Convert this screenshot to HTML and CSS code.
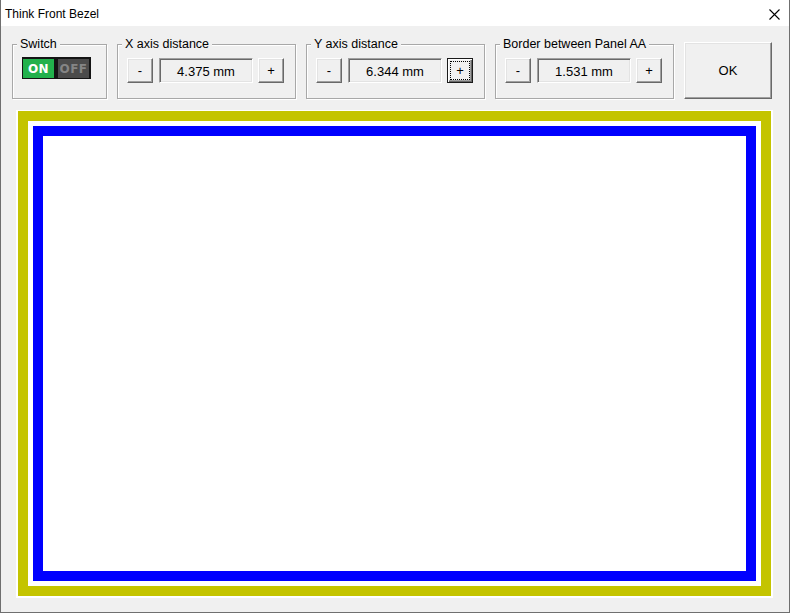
FILE: index.html
```html
<!DOCTYPE html>
<html>
<head>
<meta charset="utf-8">
<link rel="stylesheet" href="styles.css">
</head>
<body>
<div class="window">
  <div class="titlebar">
    <span class="title">Think Front Bezel</span>
    <svg class="close" width="11" height="11" viewBox="0 0 11 11"><path d="M0.5 0.5 L10.5 10.5 M10.5 0.5 L0.5 10.5" stroke="#000" stroke-width="1.1" fill="none"/></svg>
  </div>
  <div class="content">
    <div class="toolbar">
      <div class="group group-switch">
        <span class="legend">Switch</span>
        <div class="switch"><span class="sw sw-on">ON</span><span class="sw sw-off">OFF</span></div>
      </div>
      <div class="group">
        <span class="legend">X axis distance</span>
        <div class="stepper">
          <button class="btn">-</button>
          <div class="value">4.375 mm</div>
          <button class="btn">+</button>
        </div>
      </div>
      <div class="group">
        <span class="legend">Y axis distance</span>
        <div class="stepper">
          <button class="btn">-</button>
          <div class="value">6.344 mm</div>
          <button class="btn btn-focus">+</button>
        </div>
      </div>
      <div class="group">
        <span class="legend">Border between Panel AA</span>
        <div class="stepper">
          <button class="btn">-</button>
          <div class="value">1.531 mm</div>
          <button class="btn">+</button>
        </div>
      </div>
      <button class="btn ok">OK</button>
    </div>
    <div class="picture">
      <div class="frame-yellow">
        <div class="frame-blue"></div>
      </div>
    </div>
  </div>
</div>
</body>
</html>
```
FILE: styles.css
```css
* { box-sizing: border-box; }
html, body { margin: 0; padding: 0; background: #f0f0f0; }
body {
  font-family: "Liberation Sans", Arial, sans-serif;
  font-size: 12px;
  color: #000;
}
.window {
  width: 790px;
  height: 613px;
  background: #f0f0f0;
  border: 1px solid #6f6f6f;
  border-top: none;
  display: flex;
  flex-direction: column;
}
.titlebar {
  height: 26px;
  flex: none;
  background: #fff;
  display: flex;
  align-items: center;
  justify-content: space-between;
  padding: 0 9px 0 4px;
}
.title {
  font-size: 12px;
  line-height: 14px;
  padding-top: 1px;
}
.close { display: block; margin-top: 2px; }
.content {
  padding: 16px 0 0 11px;
}
.toolbar {
  display: flex;
  align-items: flex-start;
  gap: 10px;
}
.group {
  position: relative;
  margin-top: 2px;
  width: 179px;
  height: 55px;
  border: 1px solid #a8a8a8;
  box-shadow: 1px 1px 0 #fff, inset 1px 1px 0 #fff;
  padding: 13px 0 0 9px;
}
.group-switch { width: 95px; }
.legend {
  position: absolute;
  top: -7px;
  left: 4px;
  padding: 0 3px;
  background: #f0f0f0;
  font-size: 12.5px;
  line-height: 13px;
  white-space: nowrap;
}
.switch {
  margin-top: -1px;
  display: flex;
  gap: 4px;
  width: 69px;
  height: 22px;
  padding: 2px 1px 1px 1px;
  background: #141414;
}
.sw {
  width: 31px;
  height: 19px;
  display: flex;
  align-items: center;
  justify-content: center;
  font-family: "DejaVu Sans", sans-serif;
  font-weight: bold;
  font-size: 12px;
  letter-spacing: 0.5px;
}
.sw-on { background: #22b14c; color: #fff; }
.sw-off { background: #4b4b4b; color: #858585; }
.stepper {
  display: flex;
  align-items: center;
}
.btn {
  font-family: "Liberation Sans", Arial, sans-serif;
  font-size: 13px;
  color: #000;
  background: #f0f0f0;
  width: 26px;
  height: 25px;
  padding: 0;
  margin: 0;
  border: 1px solid;
  border-color: #fff #696969 #696969 #fff;
  box-shadow: inset -1px -1px 0 #a0a0a0, inset 1px 1px 0 #e3e3e3;
  display: flex;
  align-items: center;
  justify-content: center;
}
.btn-focus {
  border-color: #1a1a1a;
  box-shadow: inset 1px 1px 0 #fff, inset -1px -1px 0 #696969, inset -2px -2px 0 #a0a0a0;
  outline: 1px dotted #000;
  outline-offset: -4px;
}
.value {
  width: 94px;
  height: 25px;
  margin: 0 5px 0 6px;
  border: 1px solid;
  border-color: #a0a0a0 #fff #fff #a0a0a0;
  box-shadow: inset 1px 1px 0 #696969, inset -1px -1px 0 #e3e3e3;
  display: flex;
  align-items: center;
  justify-content: center;
  padding-top: 1px;
  font-size: 13px;
}
.ok {
  width: 88px;
  height: 57px;
}
.picture {
  margin: 11px 0 0 4px;
  width: 757px;
  height: 488px;
  border-style: solid;
  border-color: #fff;
  border-width: 1px 2px 2px 2px;
}
.frame-yellow {
  height: 100%;
  border: 10px solid #c4c400;
  padding: 5px;
  background: #fff;
}
.frame-blue {
  height: 100%;
  border: 10px solid #0000ff;
  background: #fff;
}
```
